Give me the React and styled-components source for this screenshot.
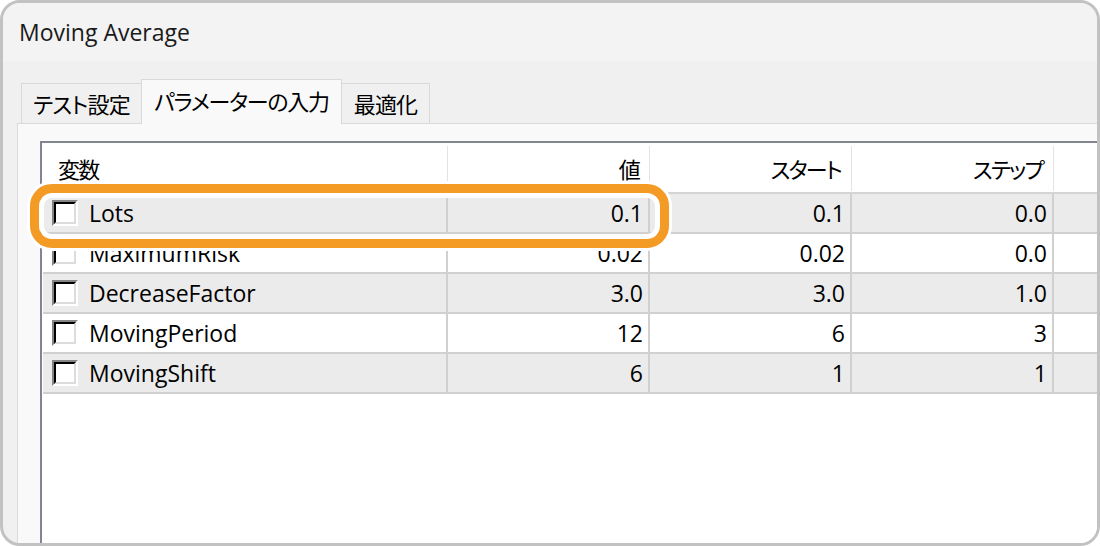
import React from 'react';
import styled, { createGlobalStyle } from 'styled-components';

const GlobalStyle = createGlobalStyle`
  body {
    margin: 0;
    background: #fff;
    font-family: "Open Sans", "Noto Sans CJK JP", sans-serif;
    color: #000;
  }
`;

const Frame = styled.div`
  position: relative;
  width: 1100px;
  height: 546px;
  box-sizing: border-box;
  border: 3px solid #c2c2c2;
  border-radius: 20px;
  overflow: hidden;
  background-color: #f0f0f0;
  display: flex;
  flex-direction: column;
`;

const TitleBar = styled.div`
  height: 59px;
  flex-shrink: 0;
  display: flex;
  align-items: center;
  padding-left: 16px;
  padding-bottom: 2px;
  box-sizing: border-box;
  background-color: #f3f3f3;
  font-size: 23px;
  color: #1a1a1a;
`;

const Body = styled.div`
  flex: 1;
  display: flex;
  flex-direction: column;
  padding: 17px 0 0 14px;
  min-height: 0;
`;

const TabStrip = styled.div`
  display: flex;
  align-items: flex-end;
  height: 45px;
  padding-left: 4px;
  margin-bottom: -1px;
  position: relative;
  z-index: 1;
`;

const Tab = styled.div`
  width: ${(props) => props.width}px;
  height: ${(props) => (props.active ? 45 : 40)}px;
  margin-bottom: ${(props) => (props.active ? 0 : 1)}px;
  box-sizing: border-box;
  border: 1px solid #d9d9d9;
  border-bottom: none;
  margin-right: -1px;
  background-color: ${(props) => (props.active ? '#f9f9f9' : '#f0f0f0')};
  display: flex;
  align-items: center;
  justify-content: center;
  padding-bottom: ${(props) => (props.active ? 5 : 1)}px;
  font-size: 22px;
  font-feature-settings: "palt";
  letter-spacing: ${(props) => (props.active ? -1.3 : -0.8)}px;
`;

const Panel = styled.div`
  flex: 1;
  display: flex;
  flex-direction: column;
  border-top: 1px solid #dadada;
  border-left: 1px solid #dadada;
  background-color: #f9f9f9;
  padding: 17px 0 0 22px;
  min-height: 0;
`;

const ListView = styled.div`
  flex: 1;
  border-top: 2px solid #82858d;
  border-left: 2px solid #82858d;
  background-color: #fff;
  padding-left: 1px;
`;

const columns = '405px 202px 202px 202px 1fr';

const HeaderRow = styled.div`
  display: grid;
  grid-template-columns: ${columns};
  height: 51px;
  box-sizing: border-box;
  border-bottom: 2px solid #d4d4d4;
`;

const HeaderCell = styled.div`
  display: flex;
  align-items: center;
  justify-content: ${(props) => (props.right ? 'flex-end' : 'flex-start')};
  padding: 0 10px 2px 15px;
  margin: 3px 0 1px;
  border-right: ${(props) => (props.last ? 'none' : '1px solid #e3e3e3')};
  font-size: 22px;
  font-feature-settings: "palt";
  letter-spacing: -1.8px;
`;

const Row = styled.div`
  display: grid;
  grid-template-columns: ${columns};
  height: 40px;
  box-sizing: border-box;
  border-bottom: 2px solid #d0d0d0;
  background-color: ${(props) => (props.shaded ? '#ebebeb' : '#fff')};
`;

const Cell = styled.div`
  display: flex;
  align-items: center;
  justify-content: flex-end;
  padding-right: 5px;
  border-right: ${(props) => (props.last ? 'none' : '2px solid #d0d0d0')};
  font-size: 23px;
`;

const NameCell = styled(Cell)`
  justify-content: flex-start;
  padding-left: 9px;
  gap: 11px;
`;

const CheckOuter = styled.span`
  display: block;
  width: 26px;
  height: 26px;
  box-sizing: border-box;
  border: 2px solid;
  border-color: #858585 #fff #fff #858585;
`;

const CheckInner = styled.span`
  display: block;
  width: 100%;
  height: 100%;
  box-sizing: border-box;
  border: 2px solid;
  border-color: #000 #dcdcdc #dcdcdc #000;
  background-color: #fff;
`;

const Highlight = styled.div`
  position: absolute;
  left: 27px;
  top: 181px;
  width: 639px;
  height: 64px;
  box-sizing: border-box;
  border: 9px solid #f39b25;
  border-radius: 22px;
  box-shadow: 0 0 0 3px #fff, inset 0 0 0 5px #fff;
  pointer-events: none;
`;

const params = [
  { name: 'Lots', value: '0.1', start: '0.1', step: '0.0' },
  { name: 'MaximumRisk', value: '0.02', start: '0.02', step: '0.0' },
  { name: 'DecreaseFactor', value: '3.0', start: '3.0', step: '1.0' },
  { name: 'MovingPeriod', value: '12', start: '6', step: '3' },
  { name: 'MovingShift', value: '6', start: '1', step: '1' },
];

function Checkbox() {
  return (
    <CheckOuter>
      <CheckInner />
    </CheckOuter>
  );
}

export default function App() {
  return (
    <>
      <GlobalStyle />
      <Frame>
        <TitleBar>Moving Average</TitleBar>
        <Body>
          <TabStrip>
            <Tab width={121}>テスト設定</Tab>
            <Tab width={201} active>
              パラメーターの入力
            </Tab>
            <Tab width={89}>最適化</Tab>
          </TabStrip>
          <Panel>
            <ListView>
              <HeaderRow>
                <HeaderCell>変数</HeaderCell>
                <HeaderCell right>値</HeaderCell>
                <HeaderCell right>スタート</HeaderCell>
                <HeaderCell right>ステップ</HeaderCell>
                <HeaderCell last />
              </HeaderRow>
              {params.map((p, i) => (
                <Row key={p.name} shaded={i % 2 === 0}>
                  <NameCell>
                    <Checkbox />
                    {p.name}
                  </NameCell>
                  <Cell>{p.value}</Cell>
                  <Cell>{p.start}</Cell>
                  <Cell>{p.step}</Cell>
                  <Cell last />
                </Row>
              ))}
            </ListView>
          </Panel>
        </Body>
        <Highlight />
      </Frame>
    </>
  );
}
